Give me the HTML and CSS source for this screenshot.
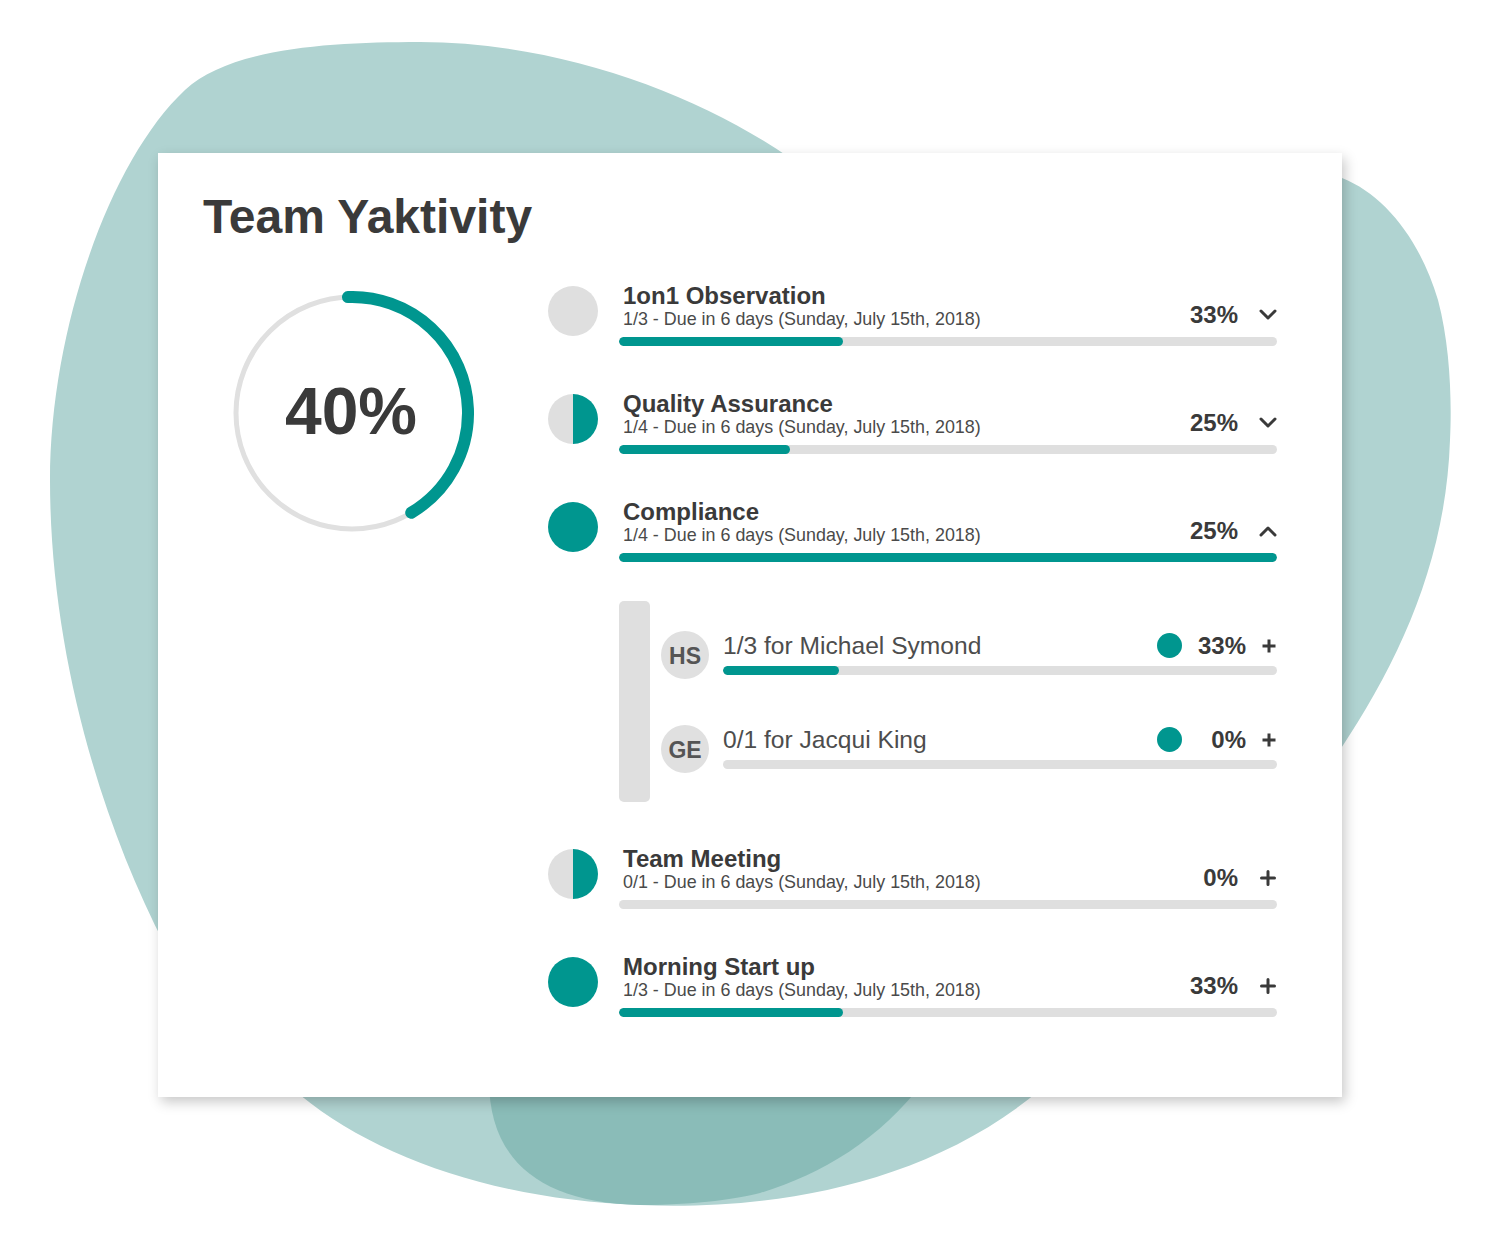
FILE: index.html
```html
<!DOCTYPE html>
<html>
<head>
<meta charset="utf-8" />
<title>Team Yaktivity</title>
<link rel="stylesheet" href="styles.css">
</head>
<body>
<div class="stage">
  <!-- background shapes -->
  <svg class="blobs" width="1500" height="1250" viewBox="0 0 1500 1250">
    <path class="blob-light" d="M165 945 C100 820 50 650 50 480 C50 330 110 160 185 90 C230 48 330 42 420 42 C560 42 700 95 790 158 L1330 170 L1342 178 C1385 195 1420 240 1438 300 C1450 345 1452 400 1450 440 C1446 560 1400 660 1340 750 L1040 1090 C920 1190 760 1210 640 1205 C500 1200 380 1160 300 1095 Z"/>
    <path class="blob-dark" d="M489 1080 C489 1160 540 1203 640 1205 C700 1205 740 1198 760 1193 C820 1175 880 1140 925 1080 Z"/>
  </svg>

  <div class="card">
    <h1 class="title">Team Yaktivity</h1>
    <div class="main">
      <div class="overall">
        <div class="ring">
          <svg width="244" height="244" viewBox="0 0 244 244">
            <circle class="ring-track" cx="122" cy="122" r="116"/>
            <circle class="ring-fill" cx="122" cy="122" r="116" stroke-dasharray="306 729" transform="rotate(-92 122 122)"/>
          </svg>
          <span class="ring-label">40%</span>
        </div>
      </div>

      <ul class="activities">
        <li class="activity">
          <span class="status"></span>
          <div class="activity-body">
            <div class="activity-head">
              <div class="activity-text">
                <h3>1on1 Observation</h3>
                <p>1/3 - Due in 6 days (Sunday, July 15th, 2018)</p>
              </div>
              <div class="activity-side">
                <span class="pct">33%</span>
                <svg class="icon" width="18" height="12" viewBox="0 0 18 12"><polyline points="2,2 9,9 16,2"/></svg>
              </div>
            </div>
            <div class="bar"><div class="bar-fill" style="width:34%"></div></div>
          </div>
        </li>

        <li class="activity">
          <span class="status half"></span>
          <div class="activity-body">
            <div class="activity-head">
              <div class="activity-text">
                <h3>Quality Assurance</h3>
                <p>1/4 - Due in 6 days (Sunday, July 15th, 2018)</p>
              </div>
              <div class="activity-side">
                <span class="pct">25%</span>
                <svg class="icon" width="18" height="12" viewBox="0 0 18 12"><polyline points="2,2 9,9 16,2"/></svg>
              </div>
            </div>
            <div class="bar"><div class="bar-fill" style="width:26%"></div></div>
          </div>
        </li>

        <li class="activity open">
          <span class="status full"></span>
          <div class="activity-body">
            <div class="activity-head">
              <div class="activity-text">
                <h3>Compliance</h3>
                <p>1/4 - Due in 6 days (Sunday, July 15th, 2018)</p>
              </div>
              <div class="activity-side">
                <span class="pct">25%</span>
                <svg class="icon" width="18" height="12" viewBox="0 0 18 12"><polyline points="2,10 9,3 16,10"/></svg>
              </div>
            </div>
            <div class="bar"><div class="bar-fill" style="width:100%"></div></div>
          </div>
        </li>

        <li class="breakdown">
          <div class="breakdown-rail"></div>
          <div class="people">
            <div class="person">
              <span class="avatar">HS</span>
              <div class="person-body">
                <div class="person-head">
                  <span class="person-name">1/3 for Michael Symond</span>
                  <span class="person-dot"></span>
                  <span class="person-pct">33%</span>
                  <svg class="plus" width="16" height="16" viewBox="0 0 16 16"><path d="M8 1.5V14.5M1.5 8H14.5"/></svg>
                </div>
                <div class="bar"><div class="bar-fill" style="width:21%"></div></div>
              </div>
            </div>
            <div class="person">
              <span class="avatar">GE</span>
              <div class="person-body">
                <div class="person-head">
                  <span class="person-name">0/1 for Jacqui King</span>
                  <span class="person-dot"></span>
                  <span class="person-pct">0%</span>
                  <svg class="plus" width="16" height="16" viewBox="0 0 16 16"><path d="M8 1.5V14.5M1.5 8H14.5"/></svg>
                </div>
                <div class="bar"><div class="bar-fill" style="width:0%"></div></div>
              </div>
            </div>
          </div>
        </li>

        <li class="activity">
          <span class="status half"></span>
          <div class="activity-body">
            <div class="activity-head">
              <div class="activity-text">
                <h3>Team Meeting</h3>
                <p>0/1 - Due in 6 days (Sunday, July 15th, 2018)</p>
              </div>
              <div class="activity-side">
                <span class="pct">0%</span>
                <svg class="icon" width="18" height="16" viewBox="0 0 18 16"><path d="M9 1.5V14.5M2.5 8H15.5"/></svg>
              </div>
            </div>
            <div class="bar"><div class="bar-fill" style="width:0%"></div></div>
          </div>
        </li>

        <li class="activity">
          <span class="status full"></span>
          <div class="activity-body">
            <div class="activity-head">
              <div class="activity-text">
                <h3>Morning Start up</h3>
                <p>1/3 - Due in 6 days (Sunday, July 15th, 2018)</p>
              </div>
              <div class="activity-side">
                <span class="pct">33%</span>
                <svg class="icon" width="18" height="16" viewBox="0 0 18 16"><path d="M9 1.5V14.5M2.5 8H15.5"/></svg>
              </div>
            </div>
            <div class="bar"><div class="bar-fill" style="width:34%"></div></div>
          </div>
        </li>
      </ul>
    </div>
  </div>
</div>
</body>
</html>
```

FILE: styles.css
```css
*{
  margin:0;
  padding:0;
  box-sizing:border-box;
}
body{
  background:#fff;
  font-family:"Liberation Sans", Arial, sans-serif;
  color:#3c3c3c;
}
.stage{
  position:relative;
  width:1500px;
  height:1250px;
  padding:153px 0 0 158px;
}
.blobs{
  position:absolute;
  top:0;
  left:0;
}
.blob-light{ fill:#b0d3d1; }
.blob-dark{ fill:#8abcb8; }

.card{
  position:relative;
  width:1184px;
  height:944px;
  background:#fff;
  padding:36px 65px 0 45px;
  box-shadow:3px 5px 12px rgba(0,0,0,0.22);
}
.title{
  font-size:48px;
  line-height:56px;
  font-weight:bold;
  color:#3a3a3a;
}
.main{
  display:grid;
  grid-template-columns:345px 1fr;
  margin-top:38px;
}

/* overall ring */
.overall{
  padding:8px 0 0 27px;
}
.ring{
  display:grid;
  width:244px;
  height:244px;
  place-items:center;
}
.ring > *{
  grid-area:1/1;
}
.ring-track{
  fill:none;
  stroke:#e0e0e0;
  stroke-width:5;
}
.ring-fill{
  fill:none;
  stroke:#00968f;
  stroke-width:12;
  stroke-linecap:round;
}
.ring-label{
  font-size:66px;
  line-height:66px;
  font-weight:bold;
  color:#3a3a3a;
  margin:0 2px 4px 0;
}

/* list */
.activities{
  list-style:none;
}
.activity{
  display:flex;
  align-items:flex-start;
  margin-bottom:45px;
}
.activity.open{ margin-bottom:39px; }
.activity:last-child{ margin-bottom:0; }
.status{
  flex:none;
  width:50px;
  height:50px;
  margin:3px 21px 0 0;
  border-radius:50%;
  background:#dfdfdf;
}
.status.half{
  background:linear-gradient(to right, #dfdfdf 50%, #00968f 50%);
}
.status.full{
  background:#00968f;
}
.activity-body{
  flex:1;
}
.activity-head{
  display:flex;
  align-items:flex-end;
  justify-content:space-between;
  padding-left:4px;
}
.activity-text h3{
  font-size:24px;
  line-height:26px;
  font-weight:bold;
  color:#3a3a3a;
}
.activity-text p{
  font-size:17.9px;
  line-height:21px;
  color:#4a4a4a;
}
.activity-side{
  display:flex;
  align-items:center;
  gap:21px;
  margin-bottom:3px;
}
.pct{
  font-size:24px;
  line-height:24px;
  font-weight:bold;
  color:#3a3a3a;
}
.icon{
  fill:none;
  stroke:#3a3a3a;
  stroke-width:3;
  stroke-linecap:round;
  stroke-linejoin:round;
}
.bar{
  height:9px;
  margin-top:7px;
  border-radius:5px;
  background:#dfdfdf;
  overflow:hidden;
}
.bar-fill{
  height:100%;
  border-radius:5px;
  background:#00968f;
}

/* breakdown per person */
.breakdown{
  display:flex;
  margin:0 0 44px 71px;
}
.breakdown-rail{
  flex:none;
  width:31px;
  border-radius:5px;
  background:#dfdfdf;
}
.people{
  flex:1;
  padding:30px 0 29px 11px;
}
.person{
  display:flex;
  align-items:flex-start;
}
.person + .person{
  margin-top:46px;
}
.avatar{
  flex:none;
  width:48px;
  height:48px;
  margin-right:14px;
  border-radius:50%;
  background:#e0e0e0;
  color:#555;
  font-size:23px;
  font-weight:bold;
  line-height:50px;
  text-align:center;
}
.person-body{
  flex:1;
}
.person-head{
  display:flex;
  align-items:center;
  height:30px;
}
.person-name{
  flex:1;
  font-size:24.6px;
  line-height:30px;
  color:#4d4d4d;
}
.person-dot{
  width:25px;
  height:25px;
  border-radius:50%;
  background:#00968f;
  margin:0 14px 2px 0;
}
.person-pct{
  min-width:50px;
  text-align:right;
  font-size:24px;
  font-weight:bold;
  color:#3a3a3a;
}
.plus{
  margin-left:15px;
  fill:none;
  stroke:#3a3a3a;
  stroke-width:3;
}
.person .bar{
  margin-top:5px;
}
```
